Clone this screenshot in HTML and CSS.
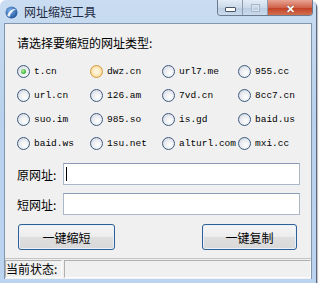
FILE: index.html
```
<!DOCTYPE html>
<html lang="zh-CN">
<head>
  <meta charset="UTF-8" />
  <title>网址缩短工具</title>
  <link rel="stylesheet" href="styles.css">
</head>
<body>
  <div class="window">
    <div class="titlebar">
      <svg class="app-icon" width="13" height="13" viewBox="0 0 13 13">
        <defs>
          <radialGradient id="g" cx="0.4" cy="0.35" r="0.7">
            <stop offset="0" stop-color="#7fb2e8"/>
            <stop offset="1" stop-color="#1d4f9a"/>
          </radialGradient>
        </defs>
        <circle cx="6.5" cy="6.5" r="6" fill="url(#g)"/>
        <path d="M2.2 9.5 C4 5 7 3 11.5 2.8 C8 4.5 5.5 7 4.5 11" fill="#ffffff" opacity="0.9"/>
      </svg>
      <span class="title">网址缩短工具</span>
      <div class="caption-btns">
        <div class="cbtn min"><span class="min-glyph"></span></div>
        <div class="cbtn max"><span class="max-glyph"></span></div>
        <div class="cbtn close">✕</div>
      </div>
    </div>

    <div class="client">
      <div class="prompt">请选择要缩短的网址类型:</div>

      <div class="radio-grid">
        <label class="opt"><span class="radio checked"></span>t.cn</label>
        <label class="opt"><span class="radio hover"></span>dwz.cn</label>
        <label class="opt"><span class="radio"></span>url7.me</label>
        <label class="opt"><span class="radio"></span>955.cc</label>

        <label class="opt"><span class="radio"></span>url.cn</label>
        <label class="opt"><span class="radio"></span>126.am</label>
        <label class="opt"><span class="radio"></span>7vd.cn</label>
        <label class="opt"><span class="radio"></span>8cc7.cn</label>

        <label class="opt"><span class="radio"></span>suo.im</label>
        <label class="opt"><span class="radio"></span>985.so</label>
        <label class="opt"><span class="radio"></span>is.gd</label>
        <label class="opt"><span class="radio"></span>baid.us</label>

        <label class="opt"><span class="radio"></span>baid.ws</label>
        <label class="opt"><span class="radio"></span>1su.net</label>
        <label class="opt"><span class="radio"></span>alturl.com</label>
        <label class="opt"><span class="radio"></span>mxi.cc</label>
      </div>

      <div class="field first">
        <span class="field-label">原网址:</span>
        <div class="input"><span class="caret"></span></div>
      </div>
      <div class="field">
        <span class="field-label">短网址:</span>
        <div class="input"></div>
      </div>

      <div class="actions">
        <button class="btn shorten">一键缩短</button>
        <button class="btn copy">一键复制</button>
      </div>

      <div class="statusbar">
        <div class="pane label-pane">当前状态:</div>
        <div class="pane value-pane"></div>
      </div>
    </div>
  </div>
</body>
</html>
```

FILE: styles.css
```
body {
  margin: 0;
  background: #ffffff;
  font-family: "Noto Sans CJK SC", "Noto Sans", sans-serif;
}

.window {
  width: 316px;
  height: 283px;
  background: linear-gradient(to bottom, #c9dcf1 0%, #b9d1ec 40%, #bcd4ef 100%);
  border-radius: 6px 6px 0 0;
  box-shadow: 1px 1px 0 #5a6a80, 2px 2px 1px rgba(0, 0, 0, 0.25);
  display: flex;
  flex-direction: column;
  box-sizing: border-box;
}

.titlebar {
  height: 23px;
  display: flex;
  align-items: flex-start;
}

.app-icon {
  margin: 6px 0 0 5px;
}

.title {
  margin: 3px 0 0 6px;
  font-size: 12px;
  line-height: 17px;
  color: #1e2a44;
}

.caption-btns {
  display: flex;
  margin-left: auto;
  margin-right: 3px;
  height: 15px;
  border: 1px solid #6d7b8f;
  border-top: none;
  border-radius: 0 0 4px 4px;
  overflow: hidden;
}

.cbtn {
  height: 15px;
  display: flex;
  align-items: center;
  justify-content: center;
  box-sizing: border-box;
}

.min, .max {
  width: 25px;
  background: linear-gradient(to bottom, #e3ecf6 0%, #cbd9e9 50%, #b8cbe0 51%, #c9dbee 100%);
  border-right: 1px solid #8c9bb0;
}

.min-glyph {
  width: 9px;
  height: 3px;
  margin-top: 4px;
  background: #fdfdfd;
  border: 1px solid #4a5566;
  border-radius: 1px;
}

.max-glyph {
  width: 7px;
  height: 6px;
  border: 1px solid #a8b6c8;
  box-shadow: inset 0 0 0 1px #d9e3ee;
}

.close {
  width: 44px;
  background: linear-gradient(to bottom, #e8a493 0%, #d0634c 50%, #c23d24 51%, #d1704f 100%);
  color: #ffffff;
  font-size: 11px;
  font-weight: bold;
  text-shadow: 0 0 1px #5a1a10;
}

.client {
  margin: 0 4px 4px 4px;
  flex: 1;
  background: #f0f0f0;
  border: 1px solid #8295ae;
  border-bottom: none;
  display: flex;
  flex-direction: column;
  box-sizing: border-box;
}

.prompt {
  margin: 11px 0 0 12px;
  font-size: 12px;
  line-height: 16px;
  color: #000000;
}

.radio-grid {
  margin: 8px 0 0 12px;
  display: grid;
  grid-template-columns: 73px 72px 76px 1fr;
  grid-auto-rows: 24px;
}

.opt {
  display: flex;
  align-items: center;
  gap: 4px;
  font-family: "Liberation Mono", "DejaVu Sans Mono", monospace;
  font-size: 9.5px;
  color: #000000;
  white-space: nowrap;
}

.radio {
  width: 11px;
  height: 11px;
  border-radius: 50%;
  border: 1px solid #3d5a80;
  background: radial-gradient(circle at 60% 65%, #ffffff 0%, #e6e9ee 55%, #c9ced6 100%);
  flex: none;
  position: relative;
}

.radio.checked::after {
  content: "";
  position: absolute;
  left: 3px;
  top: 3px;
  width: 5px;
  height: 5px;
  border-radius: 50%;
  background: radial-gradient(circle at 40% 40%, #b8f5a0 0%, #2fae2f 70%, #1c7d1c 100%);
}

.radio.hover {
  border-color: #d89a3c;
  background: radial-gradient(circle, #fffaf0 0%, #fde6b4 55%, #f3c66e 100%);
}

.field {
  display: flex;
  align-items: center;
  margin: 8px 0 0 12px;
}

.field-label {
  width: 46px;
  font-size: 12px;
  color: #000000;
}

.input {
  width: 237px;
  height: 22px;
  box-sizing: border-box;
  background: #ffffff;
  border: 1px solid #a9b7c9;
  border-top-color: #8a9cb3;
  display: flex;
  align-items: center;
}

.caret {
  width: 1px;
  height: 14px;
  margin-left: 2px;
  background: #000000;
}

.actions {
  display: flex;
  justify-content: space-between;
  margin: 9px 14px 0 13px;
}

.btn {
  height: 26px;
  box-sizing: border-box;
  border: 1px solid #2f5f93;
  border-radius: 3px;
  background: linear-gradient(to bottom, #f6f6f6 0%, #ececec 50%, #dedede 51%, #d8d8d8 100%);
  box-shadow: inset 0 0 0 1px #e6f1fb;
  font-family: "Noto Sans CJK SC", sans-serif;
  font-size: 12px;
  color: #000000;
  padding: 0;
}

.shorten {
  width: 97px;
}

.copy {
  width: 95px;
}

.statusbar {
  margin-top: auto;
  height: 19px;
  border-top: 1px solid #c4c4c4;
  display: flex;
  gap: 2px;
  padding-top: 1px;
}

.pane {
  height: 18px;
  box-sizing: border-box;
  border: 1px solid #b0b0b0;
  border-right-color: #ffffff;
  border-bottom-color: #ffffff;
}

.label-pane {
  width: 57px;
  font-size: 12px;
  line-height: 16px;
  color: #000000;
}

.value-pane {
  flex: 1;
}
```
